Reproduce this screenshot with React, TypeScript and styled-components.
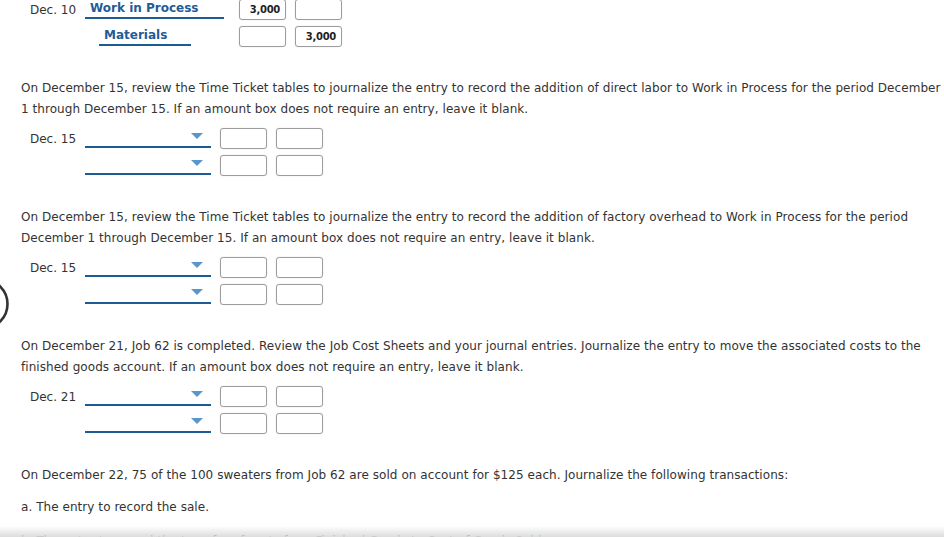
import React from "react";
import styled, { createGlobalStyle } from "styled-components";

const GlobalStyle = createGlobalStyle`
  html, body {
    margin: 0;
    padding: 0;
    background: #ffffff;
  }
  body {
    font-family: "DejaVu Sans", Verdana, sans-serif;
    font-size: 12px;
    color: #333333;
    overflow: hidden;
  }
`;

const Page = styled.main`
  padding: 0 0 0 21px;
`;

const Prompt = styled.p`
  margin: 31px 0 0;
  line-height: 21px;
  letter-spacing: 0.055px;
`;

const SubPrompt = styled.p<{ $gap?: number }>`
  margin: ${(p) => p.$gap ?? 11}px 0 0;
  line-height: 21px;
  letter-spacing: 0.055px;
`;

const Journal = styled.div<{ $first?: boolean }>`
  display: flex;
  flex-direction: column;
  gap: 6px;
  margin-top: ${(p) => (p.$first ? "-1px" : "8px")};
  padding-left: 9px;
`;

const Row = styled.div`
  display: flex;
  align-items: flex-start;
  height: 21px;
`;

const DateCell = styled.div`
  width: 55px;
  flex: none;
  padding-top: 1px;
  line-height: 21px;
  white-space: nowrap;
`;

const AccountSlot = styled.div<{ $width: number }>`
  width: ${(p) => p.$width}px;
  flex: none;
`;

const AccountLine = styled.div<{ $indent: number; $width: number }>`
  box-sizing: border-box;
  margin-left: ${(p) => p.$indent}px;
  width: ${(p) => p.$width}px;
  height: 20px;
  padding: 1px 0 0 5px;
  border-bottom: 2px solid #1d5b95;
  color: #1f5c98;
  font-weight: bold;
  line-height: 17px;
  white-space: nowrap;
`;

const SelectLine = styled.div`
  box-sizing: border-box;
  width: 126px;
  height: 20px;
  border-bottom: 2px solid #1d5b95;
  display: flex;
  justify-content: flex-end;
  align-items: flex-start;
  padding: 5px 8px 0 0;
`;

const Caret = styled.span`
  width: 0;
  height: 0;
  border-left: 6.5px solid transparent;
  border-right: 6.5px solid transparent;
  border-top: 6px solid #5a95cb;
`;

const Amounts = styled.div<{ $gap: number }>`
  display: flex;
  gap: 9px;
  margin-left: ${(p) => p.$gap}px;
`;

const AmountBox = styled.div`
  box-sizing: border-box;
  width: 47px;
  height: 21px;
  border: 1px solid #9c9c9c;
  border-radius: 3px;
  box-shadow: 0 0 1px rgba(0, 0, 0, 0.25);
  padding: 1px 5px 0 0;
  text-align: right;
  font-size: 10px;
  line-height: 18px;
  color: #222222;
  font-weight: 600;
  letter-spacing: -0.3px;
`;

const EdgeRing = styled.svg`
  position: fixed;
  left: 0;
  top: 277px;
  width: 12px;
  height: 54px;
`;

const BottomShade = styled.div`
  position: fixed;
  left: 0;
  right: 0;
  bottom: 0;
  height: 11px;
  background: linear-gradient(to bottom, rgba(255, 255, 255, 0), rgba(218, 218, 218, 0.95));
`;

type Amount = { debit?: string; credit?: string };

const AmountPair = ({ debit, credit, gap }: Amount & { gap: number }) => (
  <Amounts $gap={gap}>
    <AmountBox>{debit}</AmountBox>
    <AmountBox>{credit}</AmountBox>
  </Amounts>
);

const BlankEntry = ({ date }: { date: string }) => (
  <Journal>
    <Row>
      <DateCell>{date}</DateCell>
      <SelectLine>
        <Caret />
      </SelectLine>
      <AmountPair gap={9} />
    </Row>
    <Row>
      <DateCell />
      <SelectLine>
        <Caret />
      </SelectLine>
      <AmountPair gap={9} />
    </Row>
  </Journal>
);

export default function App() {
  return (
    <>
      <GlobalStyle />
      <Page>
        <Journal $first>
          <Row>
            <DateCell>Dec. 10</DateCell>
            <AccountSlot $width={139}>
              <AccountLine $indent={0} $width={139}>
                Work in Process
              </AccountLine>
            </AccountSlot>
            <AmountPair gap={15} debit="3,000" />
          </Row>
          <Row>
            <DateCell />
            <AccountSlot $width={139}>
              <AccountLine $indent={14} $width={92}>
                Materials
              </AccountLine>
            </AccountSlot>
            <AmountPair gap={15} credit="3,000" />
          </Row>
        </Journal>

        <Prompt>
          On December 15, review the Time Ticket tables to journalize the entry to record the addition
          of direct labor to Work in Process for the period December 1 through December 15. If an
          amount box does not require an entry, leave it blank.
        </Prompt>
        <BlankEntry date="Dec. 15" />

        <Prompt>
          On December 15, review the Time Ticket tables to journalize the entry to record the addition
          of factory overhead to Work in Process for the period December 1 through December 15. If an
          amount box does not require an entry, leave it blank.
        </Prompt>
        <BlankEntry date="Dec. 15" />

        <Prompt>
          On December 21, Job 62 is completed. Review the Job Cost Sheets and your journal entries.
          Journalize the entry to move the associated costs to the finished goods account. If an amount
          box does not require an entry, leave it blank.
        </Prompt>
        <BlankEntry date="Dec. 21" />

        <Prompt>
          On December 22, 75 of the 100 sweaters from Job 62 are sold on account for $125 each.
          Journalize the following transactions:
        </Prompt>
        <SubPrompt>a. The entry to record the sale.</SubPrompt>
        <SubPrompt $gap={13}>
          b. The entry to record the transfer of costs from Finished Goods to Cost of Goods Sold.
        </SubPrompt>
      </Page>

      <EdgeRing viewBox="0 0 12 54" aria-hidden="true">
        <circle cx="-17" cy="27" r="24.5" fill="none" stroke="#333333" strokeWidth="2.6" />
      </EdgeRing>
      <BottomShade />
    </>
  );
}
